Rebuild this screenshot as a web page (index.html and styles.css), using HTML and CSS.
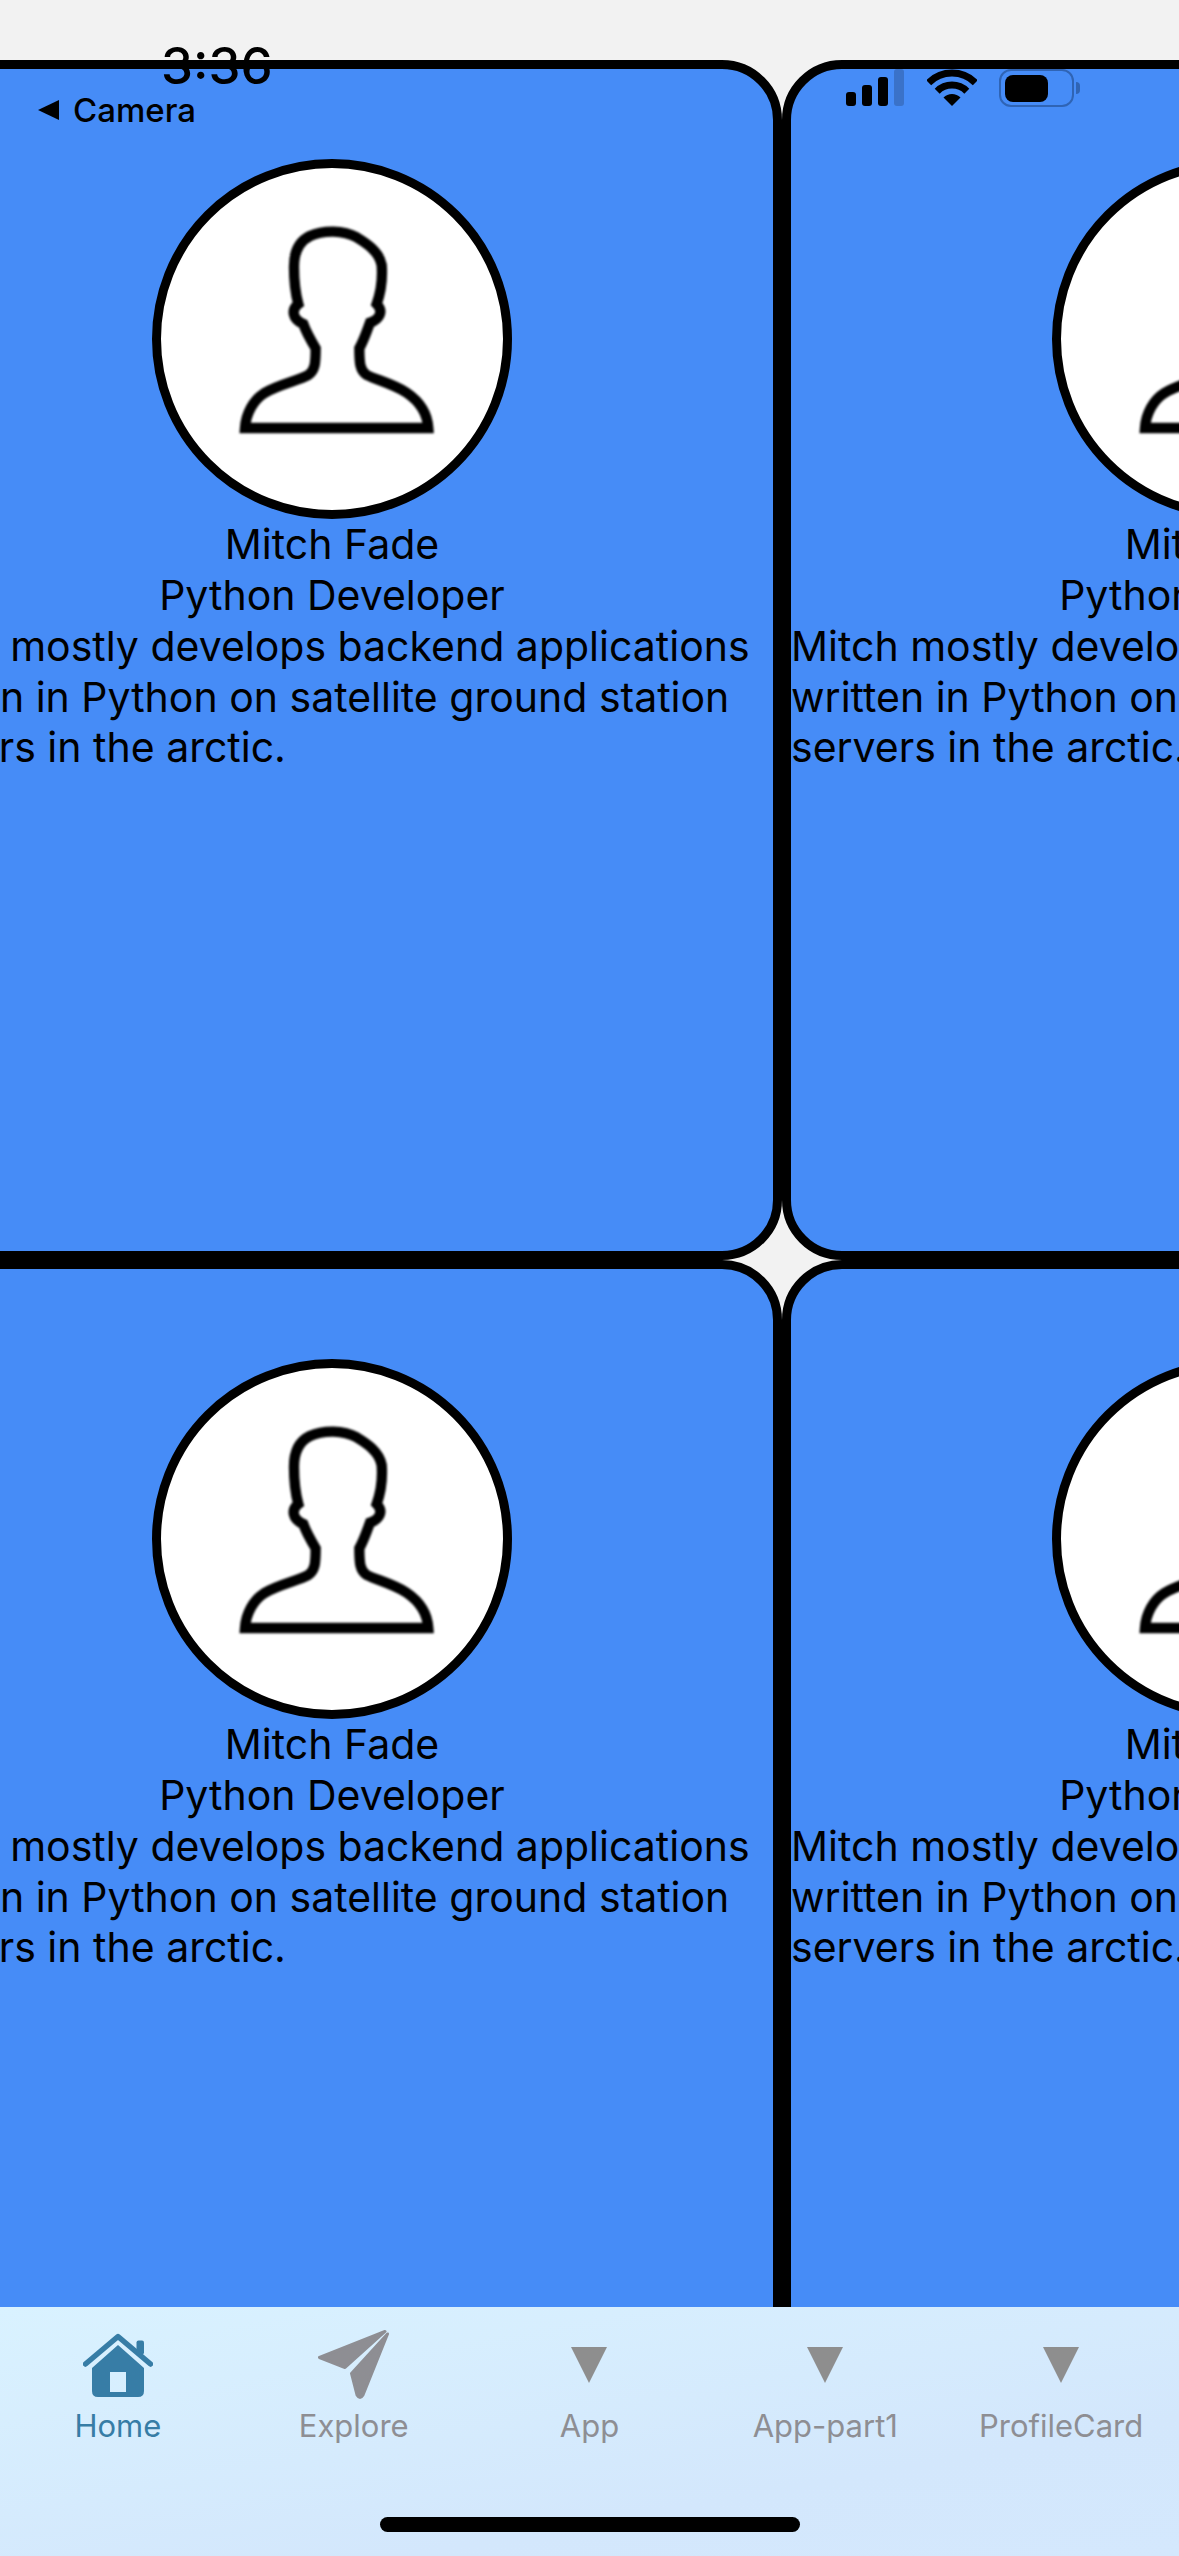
FILE: index.html
```html
<!DOCTYPE html>
<html lang="en">
<head>
    <meta charset="UTF-8">
    <meta name="viewport" content="width=device-width, initial-scale=1.0">
    <title>Profile Cards</title>
    <link rel="stylesheet" href="styles.css">
</head>
<body>
    <div class="app">
        <div class="status-bar">
            <div class="status-left">
                <div class="time">3:36</div>
                <div class="back-link"><span class="back-arrow"></span>Camera</div>
            </div>
            <div class="status-right">
                <div class="signal">
                    <span class="bar bar-1"></span>
                    <span class="bar bar-2"></span>
                    <span class="bar bar-3"></span>
                    <span class="bar bar-4"></span>
                </div>
                <svg class="wifi" width="50" height="37" viewBox="0 0 50 37">
                    <path d="M1.7 13.7A33 33 0 0 1 48.3 13.7" fill="none" stroke="#000" stroke-width="7"/>
                    <path d="M10.2 22.2A21 21 0 0 1 39.8 22.2" fill="none" stroke="#000" stroke-width="7"/>
                    <path d="M25 37L16.5 28.5A12 12 0 0 1 33.5 28.5Z" fill="#000"/>
                </svg>
                <div class="battery"><div class="battery-fill"></div></div>
            </div>
        </div>

        <main class="card-area">
            <div class="card-grid">
                <section class="card">
                    <div class="avatar">
                        <svg class="person" width="220" height="250" viewBox="6 42 660 750"><use href="#person-outline"/></svg>
                    </div>
                    <div class="name">Mitch Fade</div>
                    <div class="name">Python Developer</div>
                    <p class="bio">Mitch mostly develops backend applications written in Python on satellite ground station servers in the arctic.</p>
                </section>
                <section class="card">
                    <div class="avatar">
                        <svg class="person" width="220" height="250" viewBox="6 42 660 750"><use href="#person-outline"/></svg>
                    </div>
                    <div class="name">Mitch Fade</div>
                    <div class="name">Python Developer</div>
                    <p class="bio">Mitch mostly develops backend applications written in Python on satellite ground station servers in the arctic.</p>
                </section>
                <section class="card">
                    <div class="avatar">
                        <svg class="person" width="220" height="250" viewBox="6 42 660 750"><use href="#person-outline"/></svg>
                    </div>
                    <div class="name">Mitch Fade</div>
                    <div class="name">Python Developer</div>
                    <p class="bio">Mitch mostly develops backend applications written in Python on satellite ground station servers in the arctic.</p>
                </section>
                <section class="card">
                    <div class="avatar">
                        <svg class="person" width="220" height="250" viewBox="6 42 660 750"><use href="#person-outline"/></svg>
                    </div>
                    <div class="name">Mitch Fade</div>
                    <div class="name">Python Developer</div>
                    <p class="bio">Mitch mostly develops backend applications written in Python on satellite ground station servers in the arctic.</p>
                </section>
            </div>
        </main>

        <nav class="tab-bar">
            <div class="tab tab-active">
                <div class="tab-icon">
                    <svg width="70" height="64" viewBox="0 0 70 64">
                        <path d="M2.5 31L35 3.5L67.5 31" fill="none" stroke="#377DA6" stroke-width="5.5" stroke-linecap="round" stroke-linejoin="round"/>
                        <rect x="53.5" y="7.5" width="7.5" height="14" rx="2" fill="#377DA6"/>
                        <path fill-rule="evenodd" fill="#377DA6" d="M35 12L61 35V58Q61 64 55 64H15Q9 64 9 58V35ZM27 39V59H43V39Z"/>
                    </svg>
                </div>
                <div class="tab-label">Home</div>
            </div>
            <div class="tab">
                <div class="tab-icon">
                    <svg width="71" height="71" viewBox="0 0 71 71">
                        <path fill="#8E8E93" stroke="#8E8E93" stroke-width="3" stroke-linejoin="round" d="M67 2.5L1.5 28.5L27 38.5Z"/>
                        <path fill="#8E8E93" stroke="#8E8E93" stroke-width="3" stroke-linejoin="round" d="M69.5 5L33.5 44.5L39 66Q42 71 45 66Z"/>
                    </svg>
                </div>
                <div class="tab-label">Explore</div>
            </div>
            <div class="tab">
                <div class="tab-icon"><span class="tab-triangle"></span></div>
                <div class="tab-label">App</div>
            </div>
            <div class="tab">
                <div class="tab-icon"><span class="tab-triangle"></span></div>
                <div class="tab-label">App-part1</div>
            </div>
            <div class="tab">
                <div class="tab-icon"><span class="tab-triangle"></span></div>
                <div class="tab-label">ProfileCard</div>
            </div>
            <div class="home-indicator"></div>
        </nav>
    </div>

    <svg class="svg-defs" width="0" height="0">
        <defs>
            <path id="person-outline" fill="none" stroke="#000" stroke-width="31" stroke-linejoin="miter"
                d="M75 684H625C622 640 600 605 560 578C520 552 470 540 440 525C420 512 418 490 418 445C432 420 440 395 450 368C478 358 492 335 470 312C485 270 488 235 485 195C478 155 440 130 410 112C370 90 310 90 270 108C235 125 222 160 222 200C222 240 225 275 235 312C212 330 218 358 250 372C258 395 272 420 287 445C287 490 285 512 265 525C235 542 180 552 135 578C100 600 78 640 75 684Z"/>
        </defs>
    </svg>
</body>
</html>
```

FILE: styles.css
```css
* {
    box-sizing: border-box;
}
body {
    margin: 0;
    background-color: #f2f2f2;
    font-family: Inter, "Noto Sans", sans-serif;
    color: #000;
}
.app {
    position: relative;
    display: flex;
    flex-direction: column;
    width: 1179px;
    height: 2556px;
    overflow: hidden;
}

/* status bar sits over the cards */
.status-bar {
    position: absolute;
    top: 0;
    left: 0;
    z-index: 2;
    display: flex;
    width: 100%;
    padding-left: 38px;
}
.status-left {
    width: 808px;
}
.time {
    margin-top: 36px;
    margin-left: 123px;
    margin-bottom: -3px;
    font-size: 51px;
    font-weight: 500;
    line-height: 60px;
}
.back-link {
    display: flex;
    align-items: center;
    font-size: 33px;
    font-weight: 500;
    line-height: 34px;
}
.back-arrow {
    width: 0;
    height: 0;
    margin-right: 14px;
    border-top: 10px solid transparent;
    border-bottom: 10px solid transparent;
    border-right: 21px solid #000;
}
.status-right {
    display: flex;
    align-items: flex-start;
    padding-top: 69px;
}
.signal {
    display: flex;
    align-items: flex-end;
    gap: 6px;
    height: 37px;
    margin-right: 23px;
}
.bar {
    width: 10px;
    border-radius: 3px;
    background-color: #000;
}
.bar-1 {
    height: 14px;
}
.bar-2 {
    height: 21px;
}
.bar-3 {
    height: 29px;
}
.bar-4 {
    height: 37px;
    background-color: #3a72c9;
}
.wifi {
    margin-right: 22px;
}
.battery {
    position: relative;
    width: 75px;
    height: 38px;
    padding: 4px;
    border: 2px solid #2f64b5;
    border-radius: 12px;
}
.battery::after {
    content: "";
    position: absolute;
    top: 11px;
    right: -8px;
    width: 4px;
    height: 12px;
    border-radius: 0 6px 6px 0;
    background-color: #2f64b5;
}
.battery-fill {
    width: 43px;
    height: 27px;
    border-radius: 8px;
    background-color: #000;
}

/* cards */
.card-area {
    flex: 1;
    min-height: 0;
    padding-top: 60px;
    overflow: hidden;
}
.card-grid {
    display: grid;
    grid-template-columns: 900px 900px;
    grid-auto-rows: 1200px;
    margin-left: -118px;
}
.card {
    display: flex;
    flex-direction: column;
    align-items: center;
    padding-top: 90px;
    border: 9px solid #000;
    border-radius: 60px;
    background-color: #468cf7;
}
.avatar {
    display: flex;
    align-items: center;
    justify-content: center;
    width: 360px;
    height: 360px;
    border: 9px solid #000;
    border-radius: 50%;
    background-color: #fff;
}
.person {
    filter: blur(0.9px);
}
.name {
    font-size: 41px;
    line-height: 50.5px;
}
.bio {
    width: 100%;
    margin: 1px 0 0;
    font-size: 41px;
    line-height: 50.5px;
}

/* tab bar */
.tab-bar {
    position: relative;
    display: flex;
    flex-shrink: 0;
    height: 249px;
    background: linear-gradient(170deg, #d9f2ff 0%, #d3e7fc 70%, #d4e8fd 100%);
}
.tab {
    flex: 1;
    display: flex;
    flex-direction: column;
    align-items: center;
    color: #8e8e93;
}
.tab-active {
    color: #377da6;
}
.tab-icon {
    display: flex;
    align-items: center;
    justify-content: center;
    height: 71px;
    margin-top: 22px;
}
.tab-triangle {
    width: 0;
    height: 0;
    border-left: 18.5px solid transparent;
    border-right: 18.5px solid transparent;
    border-top: 36px solid #8e8e8e;
}
.tab-label {
    margin-top: 8px;
    font-size: 31px;
    line-height: 36px;
}
.home-indicator {
    position: absolute;
    left: 380px;
    top: 210px;
    width: 420px;
    height: 15px;
    border-radius: 8px;
    background-color: #000;
}
.svg-defs {
    position: absolute;
}
```
